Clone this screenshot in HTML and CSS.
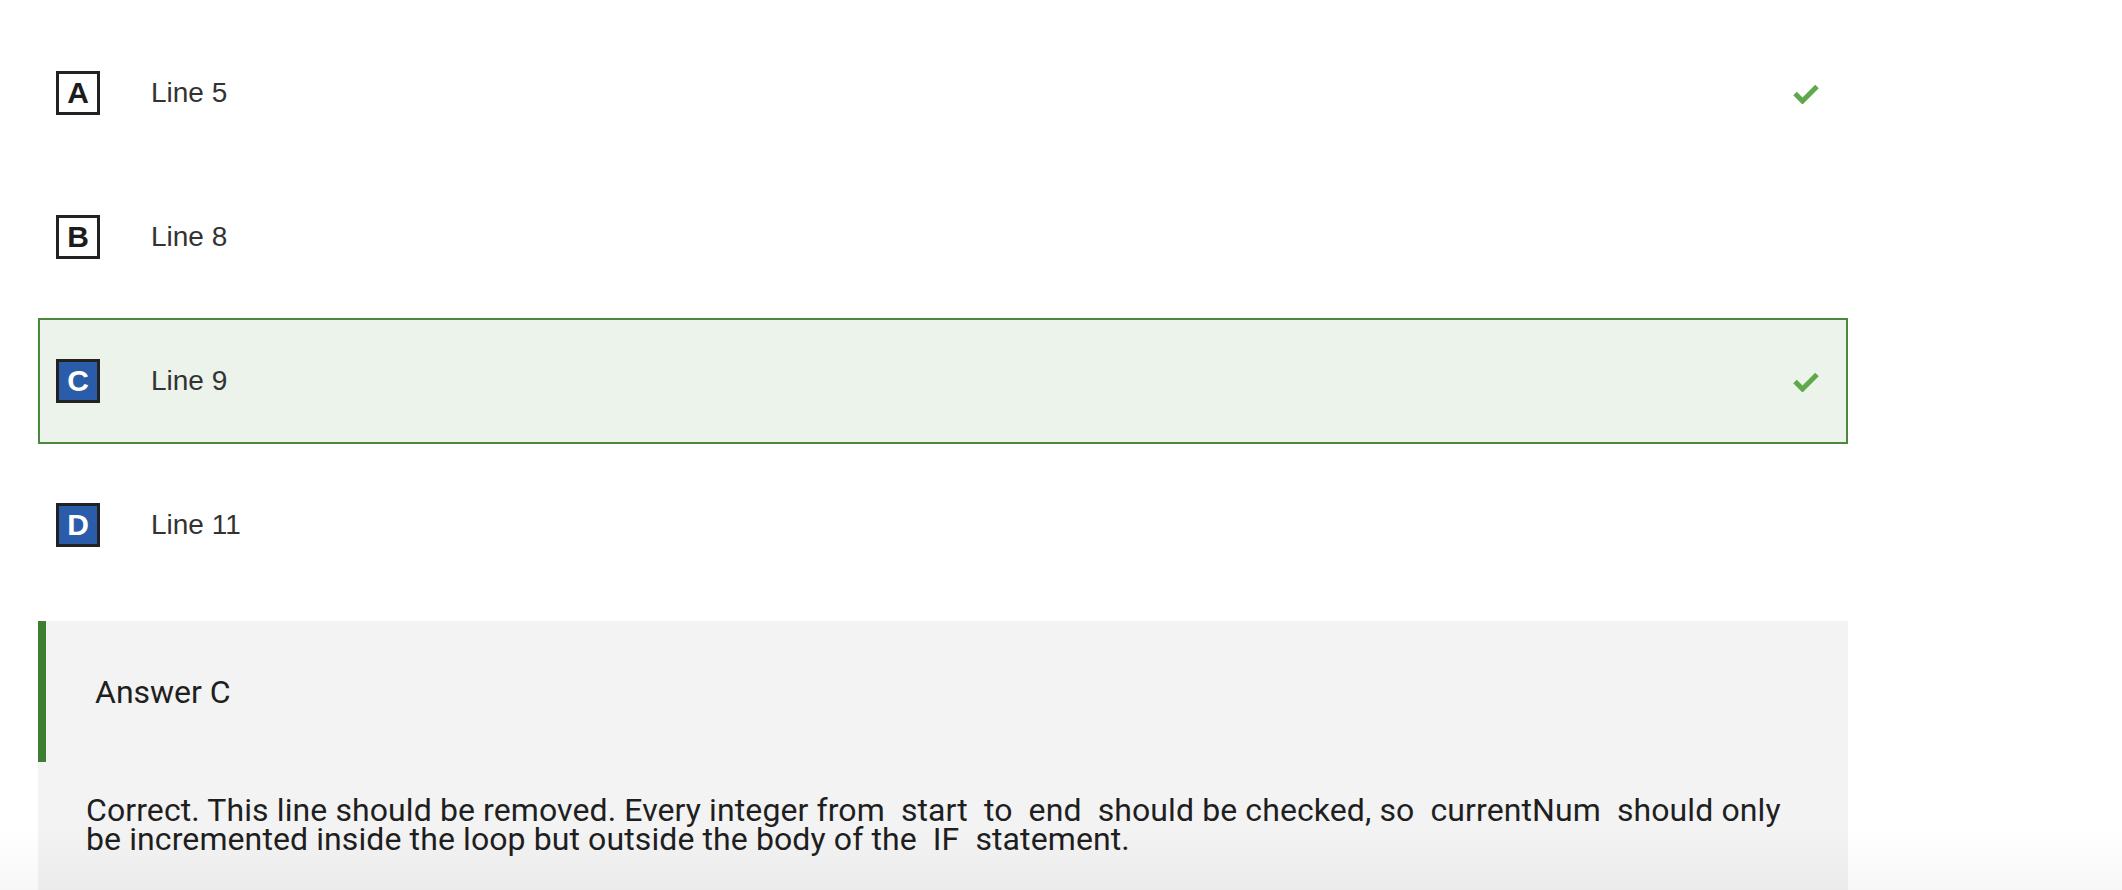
FILE: index.html
```html
<!DOCTYPE html>
<html lang="en">
  <head>
    <meta charset="UTF-8" />
    <meta name="viewport" content="width=device-width, initial-scale=1.0" />
    <title>Question review</title>
    <link rel="stylesheet" href="styles.css">
  </head>
  <body>
    <div class="quiz">
      <div class="options">
        <div class="option">
          <span class="letter">A</span>
          <span class="option-text">Line 5</span>
          <svg class="check" width="26" height="21" viewBox="0 0 26 21">
            <polyline points="2,10.5 9.5,18 24,3.5" />
          </svg>
        </div>
        <div class="option">
          <span class="letter">B</span>
          <span class="option-text">Line 8</span>
        </div>
        <div class="option correct">
          <span class="letter chosen">C</span>
          <span class="option-text">Line 9</span>
          <svg class="check" width="26" height="21" viewBox="0 0 26 21">
            <polyline points="2,10.5 9.5,18 24,3.5" />
          </svg>
        </div>
        <div class="option">
          <span class="letter chosen">D</span>
          <span class="option-text">Line 11</span>
        </div>
      </div>

      <div class="feedback">
        <div class="feedback-title">Answer C</div>
        <div class="feedback-body">
          Correct. This line should be removed. Every integer from
          <code>start</code> to <code>end</code> should be checked, so
          <code>currentNum</code> should only be incremented inside the loop
          but outside the body of the <code>IF</code> statement.
        </div>
      </div>
    </div>
    <div class="bottom-shade"></div>
  </body>
</html>
```

FILE: styles.css
```css
body {
  margin: 0;
  background-color: #fff;
  font-family: "Liberation Sans", Arial, sans-serif;
  color: #333;
  overflow: hidden;
}

.quiz {
  width: 1810px;
  margin-left: 38px;
  padding-top: 30px;
}

.options {
  display: flex;
  flex-direction: column;
  gap: 18px;
}

.option {
  display: flex;
  align-items: center;
  height: 126px;
  box-sizing: border-box;
  border: 2px solid transparent;
  padding: 0 27px 0 16px;
}

.option.correct {
  background-color: #ecf3eb;
  border-color: #4b873f;
}

.letter {
  display: flex;
  align-items: center;
  justify-content: center;
  width: 44px;
  height: 44px;
  box-sizing: border-box;
  border: 3px solid #222;
  font-size: 30px;
  font-weight: bold;
  color: #1c1c1c;
}

.letter.chosen {
  background-color: #2a5caa;
  color: #fff;
}

.option-text {
  flex: 1;
  margin-left: 51px;
  font-size: 28px;
  color: #333;
}

.check polyline {
  fill: none;
  stroke: #5fa84c;
  stroke-width: 5;
}

.feedback {
  margin-top: 33px;
  background-color: #f3f3f3;
  font-family: Roboto, "Liberation Sans", sans-serif;
  color: #1f1f1f;
  min-height: 300px;
}

.feedback-title {
  display: flex;
  align-items: center;
  height: 141px;
  box-sizing: border-box;
  border-left: 8px solid #3e7e33;
  padding-left: 49px;
  font-size: 32px;
}

.feedback-body {
  padding: 34px 49px 40px 48px;
  font-size: 32px;
  line-height: 29px;
  letter-spacing: 0.1px;
}

.feedback-body code {
  font-family: inherit;
  padding: 0 8px;
}

.bottom-shade {
  position: fixed;
  left: 0;
  right: 0;
  bottom: 0;
  height: 60px;
  background: linear-gradient(rgba(0, 0, 0, 0), rgba(0, 0, 0, 0.03));
  pointer-events: none;
}
```
